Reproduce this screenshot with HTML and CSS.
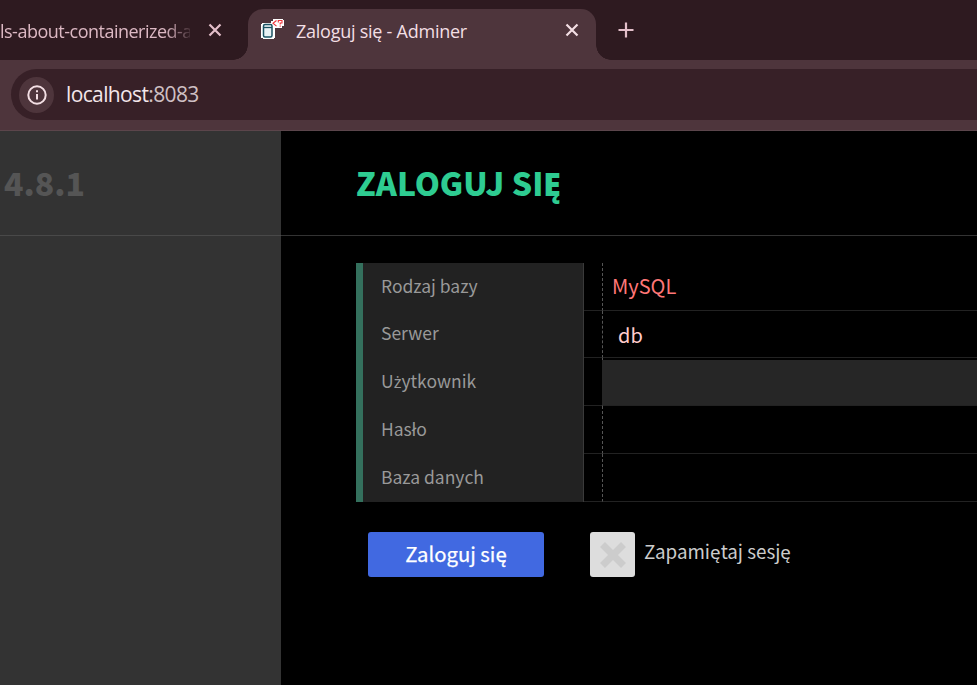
FILE: index.html
```html
<!DOCTYPE html>
<html lang="pl">
<head>
<meta charset="utf-8">
<title>Zaloguj się - Adminer</title>
<link rel="stylesheet" href="styles.css">
</head>
<body>
<header class="browser">
  <div class="tabs">
    <div class="tab tab-idle">
      <span class="tab-title idle-title">ls-about-containerized-a</span>
      <svg class="idle-close" width="14" height="14" viewBox="0 0 14 14"><path d="M1.5 1.5l11 11M12.5 1.5l-11 11"/></svg>
    </div>
    <div class="tab tab-active">
      <svg class="favicon" width="24" height="24" viewBox="0 0 24 24">
        <path class="outline" d="M1 5h9V3h2V1h10v1h1v6h-2v2h-7v10h-1v1H2v-1H0V6h1z"/>
        <rect class="can" x="2.500" y="6.500" width="8.500" height="12.500" rx="1.500"/>
        <path class="can-lid" d="M3 9.500h8"/>
        <path class="code" d="M15.500 2.500l-3.500 2.800 3.500 2.800M17.300 4.500V2.500h3.700v2.500h-1.800v1.500M19.200 7.500v1.300"/>
      </svg>
      <span class="tab-title">Zaloguj się - Adminer</span>
      <svg class="active-close" width="14" height="14" viewBox="0 0 14 14"><path d="M1.500 1.500l11 11M12.500 1.500l-11 11"/></svg>
    </div>
    <svg class="new-tab" width="16" height="16" viewBox="0 0 16 16"><path d="M8 .5v15M.5 8h15"/></svg>
  </div>
  <div class="toolbar">
    <div class="omnibox">
      <span class="info"><svg width="20" height="20" viewBox="0 0 20 20"><circle cx="10" cy="10" r="8.700"/><path d="M10 9v5.500M10 5.300v2"/></svg></span>
      <span class="url">localhost<span class="port">:8083</span></span>
    </div>
  </div>
</header>
<div class="page">
  <aside><h1 class="version">4.8.1</h1></aside>
  <main>
    <h2>ZALOGUJ SIĘ</h2>
    <form>
      <div class="fields">
        <div class="row"><div class="label">Rodzaj bazy</div><div class="gap"></div><div class="value driver">MySQL</div></div>
        <div class="row short"><div class="label">Serwer</div><div class="gap"></div><div class="value server">db</div></div>
        <div class="row"><div class="label">U<span class="dotted">ż</span>ytkownik</div><div class="gap"></div><div class="value"><div class="focused"></div></div></div>
        <div class="row"><div class="label">Hasło</div><div class="gap"></div><div class="value"></div></div>
        <div class="row"><div class="label">Baza danych</div><div class="gap"></div><div class="value"></div></div>
      </div>
      <div class="actions">
        <button type="button">Zaloguj się</button>
        <span class="check"><svg width="26" height="26" viewBox="0 0 26 26"><path d="M2.500 2.500l21 21M23.500 2.500l-21 21"/></svg></span>
        <span class="remember">Zapamiętaj sesję</span>
      </div>
    </form>
  </main>
</div>
</body>
</html>
```
FILE: styles.css
```css
* { box-sizing: border-box; }
body {
  margin: 0;
  width: 977px;
  height: 685px;
  overflow: hidden;
  background: #000;
  font-family: "Noto Sans CJK SC", "Noto Sans", sans-serif;
}
svg { display: block; flex: none; }
span { white-space: nowrap; }

.browser { font-family: "Open Sans", "Noto Sans", sans-serif; }
.tabs { display: flex; height: 60px; background: #2e1a20; }
.tab { display: flex; align-items: flex-start; }
.tab-title { font-size: 18px; line-height: 24px; color: #f3dfe4; }
.tab-idle { width: 248px; padding-top: 19px; }
.idle-title {
  width: 190px;
  overflow: hidden;
  color: #dcb8c3;
  letter-spacing: -0.5px;
  -webkit-mask-image: linear-gradient(90deg, #000 165px, transparent 194px);
  mask-image: linear-gradient(90deg, #000 165px, transparent 194px);
}
.idle-close, .active-close, .new-tab { fill: none; stroke-width: 2.2; }
.idle-close { margin: 4px 0 0 18px; stroke: #e3bfca; }
.tab-active {
  position: relative;
  width: 348px;
  height: 51px;
  margin-top: 9px;
  padding: 10px 17px 0 13px;
  border-radius: 15px 15px 0 0;
  background: #4e353c;
}
.tab-active::before, .tab-active::after {
  content: "";
  position: absolute;
  bottom: 0;
  width: 15px;
  height: 15px;
}
.tab-active::before { left: -15px; background: radial-gradient(circle at 0 0, transparent 14.5px, #4e353c 15px); }
.tab-active::after { right: -15px; background: radial-gradient(circle at 100% 0, transparent 14.5px, #4e353c 15px); }
.tab-active .tab-title { margin-left: 11px; letter-spacing: -0.25px; }
.favicon { margin-top: -1px; }
.outline { fill: #fff; }
.can { fill: #e9f1f4; stroke: #1b5363; stroke-width: 1.5; }
.can-lid { fill: none; stroke: #1b5363; stroke-width: 1.3; }
.code { fill: none; stroke: #f0343a; stroke-width: 1.1; }
.active-close { margin: 4px 0 0 auto; stroke: #f3dfe4; }
.new-tab { margin: 22px 0 0 22px; stroke: #e3bfca; }
.toolbar { height: 71px; padding: 9px 0 0 11px; background: #4e353c; border-bottom: 1px solid #5b454b; }
.omnibox {
  display: flex;
  align-items: center;
  height: 51px;
  padding-left: 8px;
  border-radius: 26px 0 0 26px;
  background: #372027;
}
.info { display: grid; place-items: center; width: 35px; height: 36px; border-radius: 50%; background: #4e353c; }
.info svg { fill: none; stroke: #f3dfe4; stroke-width: 2; }
.url { margin-left: 12px; padding-bottom: 2px; font-size: 21px; letter-spacing: -0.63px; color: #f3e6ea; }
.port { color: #cfc0c4; }

.page { display: flex; height: 554px; }
aside { width: 281px; background: #333; }
.version {
  height: 105px;
  margin: 0;
  padding-left: 4px;
  border-bottom: 1px solid #494949;
  font-size: 32px;
  font-weight: 900;
  line-height: 103px;
  color: #555;
}
main { flex: 1; background: #000; }
h2 {
  height: 105px;
  margin: 0;
  padding-left: 75px;
  border-bottom: 1px solid #333;
  font-size: 32px;
  font-weight: 900;
  line-height: 103px;
  color: #2ecc91;
}
form { padding: 27px 0 0 75px; }
.row { display: flex; height: 48px; }
.row.short { height: 47px; }
.label {
  width: 228px;
  padding-left: 18px;
  border-left: 7px solid #34705d;
  border-right: 1px solid #3a3a3a;
  background: #222;
  font-size: 17.5px;
  line-height: 45px;
  color: #999;
}
.short .label { line-height: 43px; }
.dotted { font-family: "Noto Sans", sans-serif; font-size: 16.5px; line-height: 1; }
.gap { width: 18px; border-bottom: 1px solid #222; }
.value { flex: 1; border-left: 1px dashed #555; border-bottom: 1px solid #222; }
.driver { padding-left: 9px; font-size: 20px; line-height: 45px; color: #f77; }
.server { padding-left: 15px; font-size: 20px; line-height: 47px; color: #fcc; }
.focused { height: 45px; margin: 2px 0 0 -1px; background: #262626; }
.actions { display: flex; margin: 30px 0 0 12px; height: 45px; }
button {
  width: 176px;
  height: 45px;
  padding: 0 0 2px;
  border: 0;
  border-radius: 3px;
  background: #4169e1;
  font: 400 20.3px/43px "Noto Sans CJK SC", "Noto Sans", sans-serif;
  color: #fff;
  -webkit-text-stroke: 0.25px #fff;
}
.check { display: grid; place-items: center; width: 45px; height: 45px; margin-left: 46px; border-radius: 3px; background: #ddd; }
.check path { stroke: #ccc; stroke-width: 7; }
.remember { margin-left: 9px; font-size: 18.8px; line-height: 38px; color: #ccc; }
```
